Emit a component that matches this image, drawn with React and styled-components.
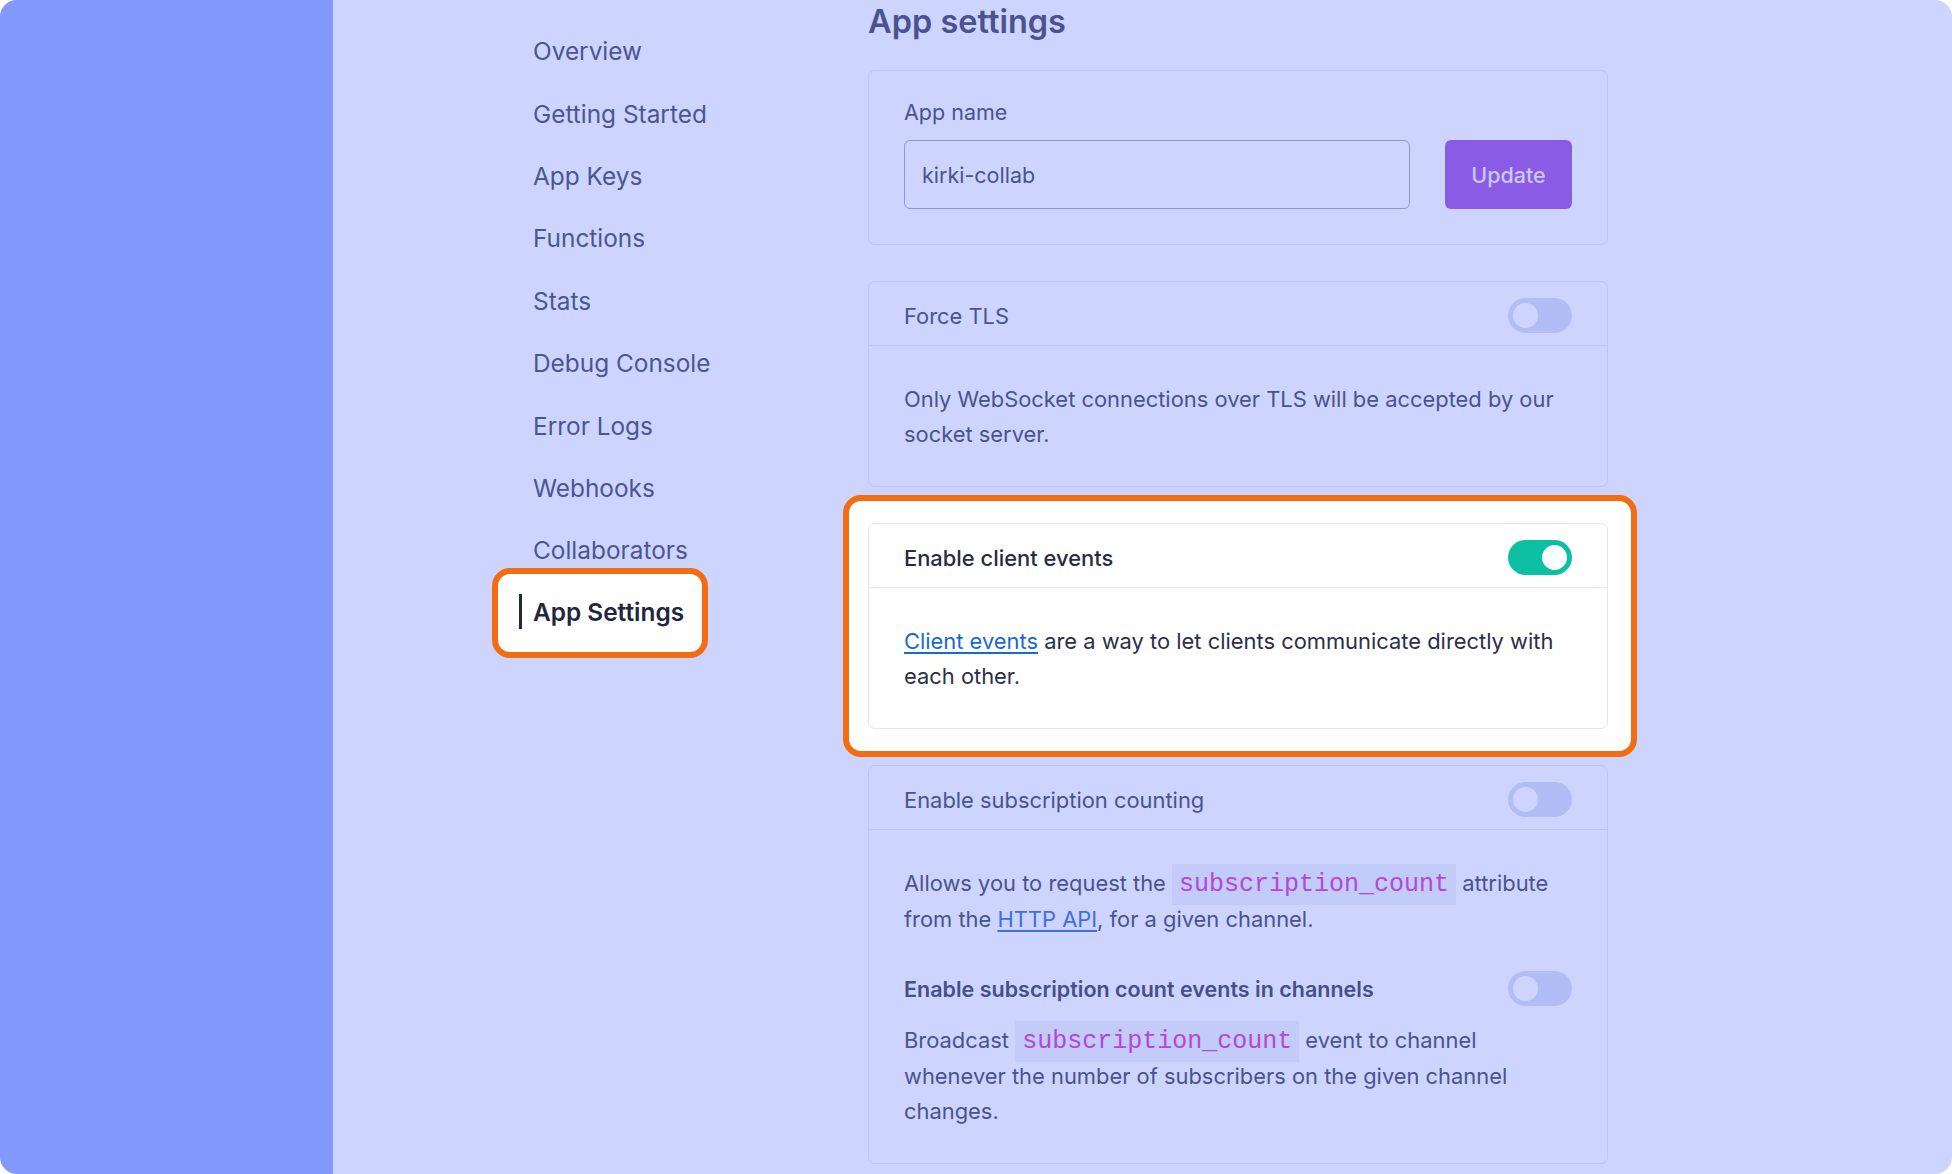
import React, { useState } from "react";
import styled, { createGlobalStyle } from "styled-components";

const GlobalStyle = createGlobalStyle`
  * {
    box-sizing: border-box;
  }
  html,
  body {
    margin: 0;
    background: #ffffff;
  }
  body {
    font-family: Inter, "Noto Sans", sans-serif;
    -webkit-font-smoothing: antialiased;
  }
`;

const Frame = styled.div`
  width: 1952px;
  height: 1174px;
  border-radius: 17px;
  overflow: hidden;
  display: grid;
  grid-template-columns: 333px 1fr;
  background: #cdd5fe;
`;

const SidePanel = styled.aside`
  background: #8299fe;
`;

const Main = styled.main`
  display: flex;
  padding-left: 200px;
`;

const Nav = styled.nav`
  width: 335px;
  display: flex;
  flex-direction: column;
  padding-top: 20px;
`;

const NavItem = styled.a`
  height: 62.4px;
  display: flex;
  align-items: center;
  font-size: 24.4px;
  color: #4b5592;
  text-decoration: none;
  cursor: pointer;
`;

// the current page gets a white, orange-ringed callout
const ActiveItem = styled.a`
  width: 216px;
  height: 90px;
  margin: -13.8px 0 -13.8px -41px;
  padding: 0 0 2px 21px;
  display: flex;
  align-items: center;
  background: #ffffff;
  border: 6px solid #f36c12;
  border-radius: 18px;
  font-size: 24.4px;
  font-weight: 600;
  color: #22263e;
  text-decoration: none;
`;

const ActiveBar = styled.span`
  width: 3px;
  height: 35px;
  margin-right: 11px;
  background: #23273d;
`;

const Content = styled.section`
  width: 740px;
  display: flex;
  flex-direction: column;
  gap: 36px;
`;

const Heading = styled.h1`
  margin: 0 0 -10px;
  font-size: 32.5px;
  line-height: 44px;
  font-weight: 600;
  color: #4a5290;
`;

const Card = styled.div`
  border: 1px solid ${(p) => (p.$lit ? "#e2e5f5" : "#bcc5f5")};
  border-radius: 7px;
  background: ${(p) => (p.$lit ? "#ffffff" : "transparent")};
`;

const NameCard = styled(Card)`
  padding: 27px 35px 35px;
`;

const Label = styled.label`
  display: block;
  font-size: 21.5px;
  line-height: 28px;
  color: #4a5290;
`;

const NameRow = styled.div`
  margin-top: 14px;
  display: flex;
  gap: 35px;
`;

const NameInput = styled.input`
  width: 506px;
  height: 69px;
  padding: 0 17px;
  border: 1px solid #8c97d9;
  border-radius: 6px;
  background: transparent;
  font-family: inherit;
  font-size: 21.5px;
  color: #4a5290;
  outline: none;
`;

const UpdateButton = styled.button`
  width: 127px;
  height: 69px;
  border: none;
  border-radius: 6px;
  background: #8a5ce6;
  font-family: inherit;
  font-size: 21.5px;
  font-weight: 500;
  color: #cbc8fb;
  cursor: pointer;
`;

// a callout ring that sits outside the card it wraps
const Spotlight = styled.div`
  margin: -28px -29px -28px -25px;
  padding: 22px 23px 22px 19px;
  border: 6px solid #f36c12;
  border-radius: 18px;
  background: #ffffff;
`;

const CardHeader = styled.div`
  height: 64px;
  padding: 4px 35px 0;
  display: flex;
  align-items: center;
  justify-content: space-between;
  border-bottom: 1px solid ${(p) => (p.$lit ? "#e2e5f5" : "#bcc5f5")};
  font-size: 21.9px;
  font-weight: ${(p) => (p.$lit ? 500 : 400)};
  color: ${(p) => (p.$lit ? "#272b44" : "#4a5290")};
`;

const CardBody = styled.div`
  padding: 36px 35px 34px;
`;

const Text = styled.p`
  margin: 0;
  font-size: 21.9px;
  line-height: 35px;
  color: ${(p) => (p.$lit ? "#2b2f48" : "#4a5290")};
`;

const Link = styled.a`
  color: ${(p) => (p.$lit ? "#1769d4" : "#3e6ee2")};
  text-decoration: underline;
  text-underline-offset: 3px;
  text-decoration-thickness: 1.5px;
`;

const Code = styled.code`
  padding: 6px 7px;
  background: #c3cbf9;
  font-family: "Liberation Mono", "DejaVu Sans Mono", monospace;
  font-size: 25px;
  color: #b447d8;
`;

const SubRow = styled.div`
  margin: 34px 0 17px;
  height: 35px;
  display: flex;
  align-items: center;
  justify-content: space-between;
  font-size: 21.5px;
  font-weight: 600;
  color: #464e8c;
`;

const Track = styled.button`
  width: 64px;
  height: 35px;
  padding: 5px;
  display: flex;
  justify-content: ${(p) => (p.$on ? "flex-end" : "flex-start")};
  border: none;
  border-radius: 18px;
  background: ${(p) => (p.$on ? "#0dbfa3" : "#b3bdf5")};
  cursor: pointer;
`;

const Knob = styled.span`
  width: 25px;
  height: 25px;
  border-radius: 50%;
  background: ${(p) => (p.$on ? "#ffffff" : "#cdd5fe")};
`;

const Toggle = ({ on, onChange }) => (
  <Track $on={on} onClick={() => onChange(!on)}>
    <Knob $on={on} />
  </Track>
);

const navLinks = [
  "Overview",
  "Getting Started",
  "App Keys",
  "Functions",
  "Stats",
  "Debug Console",
  "Error Logs",
  "Webhooks",
  "Collaborators",
];

const App = () => {
  const [appName, setAppName] = useState("kirki-collab");
  const [flags, setFlags] = useState({
    tls: false,
    clientEvents: true,
    subCount: false,
    subCountEvents: false,
  });

  const setFlag = (key) => (value) => setFlags({ ...flags, [key]: value });

  return (
    <>
      <GlobalStyle />
      <Frame>
        <SidePanel />
        <Main>
          <Nav>
            {navLinks.map((link) => (
              <NavItem key={link}>{link}</NavItem>
            ))}
            <ActiveItem>
              <ActiveBar />
              App Settings
            </ActiveItem>
          </Nav>

          <Content>
            <Heading>App settings</Heading>

            <NameCard>
              <Label htmlFor="app-name">App name</Label>
              <NameRow>
                <NameInput
                  id="app-name"
                  value={appName}
                  onChange={(e) => setAppName(e.target.value)}
                />
                <UpdateButton>Update</UpdateButton>
              </NameRow>
            </NameCard>

            <Card>
              <CardHeader>
                Force TLS
                <Toggle on={flags.tls} onChange={setFlag("tls")} />
              </CardHeader>
              <CardBody>
                <Text>
                  Only WebSocket connections over TLS will be accepted by our
                  socket server.
                </Text>
              </CardBody>
            </Card>

            <Spotlight>
              <Card $lit>
                <CardHeader $lit>
                  Enable client events
                  <Toggle
                    on={flags.clientEvents}
                    onChange={setFlag("clientEvents")}
                  />
                </CardHeader>
                <CardBody>
                  <Text $lit>
                    <Link $lit>Client events</Link> are a way to let clients
                    communicate directly with each other.
                  </Text>
                </CardBody>
              </Card>
            </Spotlight>

            <Card>
              <CardHeader>
                Enable subscription counting
                <Toggle on={flags.subCount} onChange={setFlag("subCount")} />
              </CardHeader>
              <CardBody>
                <Text>
                  Allows you to request the <Code>subscription_count</Code>{" "}
                  attribute from the <Link>HTTP API</Link>, for a given
                  channel.
                </Text>
                <SubRow>
                  Enable subscription count events in channels
                  <Toggle
                    on={flags.subCountEvents}
                    onChange={setFlag("subCountEvents")}
                  />
                </SubRow>
                <Text>
                  Broadcast <Code>subscription_count</Code> event to channel
                  whenever the number of subscribers on the given channel
                  changes.
                </Text>
              </CardBody>
            </Card>
          </Content>
        </Main>
      </Frame>
    </>
  );
};

export default App;
